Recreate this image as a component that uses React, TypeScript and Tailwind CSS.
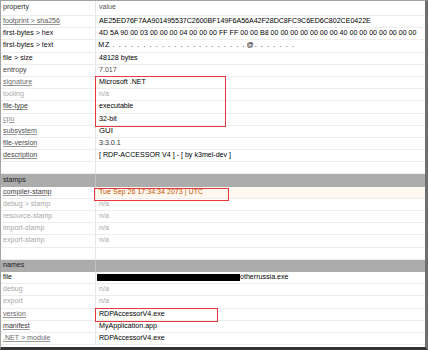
import React from "react";

type Kind = "plain" | "link" | "dim" | "head";
type Row = {
  k?: string;
  kind?: Kind;
  kc?: string;
  v?: React.ReactNode;
  vc?: string;
  vbg?: string;
  section?: boolean;
  empty?: boolean;
};

const SHA = "AE25ED76F7AA901495537C2600BF149F6A56A42F28DC8FC9C6ED6C802CE0422E";
const HEX =
  "4D 5A 90 00 03 00 00 00 04 00 00 00 FF FF 00 00 B8 00 00 00 00 00 00 00 40 00 00 00 00 00 00 00";
const TXT = ["M", "Z", ...Array(22).fill("."), "@", ...Array(7).fill(".")];

function TextBytes() {
  return (
    <span className="flex ml-[-1px]">
      {TXT.map((c, i) => (
        <span key={i} className="inline-block w-[6.2px] text-center">
          {c}
        </span>
      ))}
    </span>
  );
}

const NA = "n/a";

const rows: Row[] = [
  { k: "footprint > sha256", kind: "link", kc: "text-[#5a5a5a]", v: SHA, vc: "text-black tracking-[-0.03px]" },
  { k: "first-bytes > hex", kind: "plain", v: HEX, vc: "text-black" },
  { k: "first-bytes > text", kind: "plain", v: <TextBytes />, vc: "text-black" },
  { k: "file > size", kind: "plain", v: "48128 bytes", vc: "text-black" },
  { k: "entropy", kind: "plain", kc: "text-[#444]", v: "7.017", vc: "text-[#555]" },
  { k: "signature", kind: "link", kc: "text-[#707070]", v: "Microsoft .NET", vc: "text-black" },
  { k: "tooling", kind: "dim", v: NA, vc: "text-[#a8a8a8]" },
  { k: "file-type", kind: "link", kc: "text-[#3a3a3a]", v: "executable", vc: "text-black" },
  { k: "cpu", kind: "link", kc: "text-[#8e8e8e]", v: "32-bit", vc: "text-black" },
  { k: "subsystem", kind: "link", kc: "text-[#555]", v: "GUI", vc: "text-black text-[7.8px]" },
  { k: "file-version", kind: "link", kc: "text-[#4a4a4a]", v: "3.3.0.1", vc: "text-[#333]" },
  {
    k: "description",
    kind: "link",
    kc: "text-[#4a4a4a]",
    v: "[ RDP-ACCESSOR V4 ] - [ by k3mel-dev ]",
    vc: "text-black",
  },
  { empty: true },
  { k: "stamps", section: true },
  {
    k: "compiler-stamp",
    kind: "link",
    kc: "text-[#3a3a3a]",
    v: "Tue Sep 26 17:34:34 2073 | UTC",
    vc: "text-[#c25400]",
    vbg: "bg-[#fff8f1]",
  },
  { k: "debug > stamp", kind: "dim", v: NA, vc: "text-[#a8a8a8]" },
  { k: "resource-stamp", kind: "dim", v: NA, vc: "text-[#a8a8a8]" },
  { k: "import-stamp", kind: "dim", v: NA, vc: "text-[#a8a8a8]" },
  { k: "export-stamp", kind: "dim", v: NA, vc: "text-[#a8a8a8]" },
  { empty: true },
  { k: "names", section: true },
  {
    k: "file",
    kind: "plain",
    v: (
      <span className="flex items-center">
        <span className="inline-block w-[143px] h-[7px] bg-black ml-[-2px]" />
        <span>otherrussia.exe</span>
      </span>
    ),
    vc: "text-black",
  },
  { k: "debug", kind: "dim", v: NA, vc: "text-[#a8a8a8]" },
  { k: "export", kind: "dim", v: NA, vc: "text-[#a8a8a8]" },
  { k: "version", kind: "link", kc: "text-[#6a6a6a]", v: "RDPAccessorV4.exe", vc: "text-black" },
  { k: "manifest", kind: "link", kc: "text-[#3a3a3a]", v: "MyApplication.app", vc: "text-black" },
  { k: ".NET > module", kind: "link", kc: "text-[#6a6a6a]", v: "RDPAccessorV4.exe", vc: "text-black" },
];

function keyClass(r: Row) {
  if (r.kind === "link")
    return `${r.kc ?? "text-[#555]"} underline decoration-[#9a9a9a] underline-offset-[1px]`;
  if (r.kind === "dim") return "text-[#a8a8a8]";
  return r.kc ?? "text-[#111]";
}

export default function App() {
  return (
    <div
      className="relative w-[428px] h-[350px] bg-white border-l border-t border-l-[#a3a3a3] border-t-[#a3a3a3] border-r-[3px] border-r-[#6f6f6f] border-b-[3px] border-b-[#343434] overflow-hidden text-[7.1px] leading-none"
      style={{ fontFamily: '"Liberation Sans", Arial, sans-serif' }}
    >
      <div className="flex flex-col">
        <div className="flex h-[15px] border-b border-[#ededed]">
          <div className="w-[95px] shrink-0 pl-[2px] flex items-center border-r border-[#e6e6e6] text-[#2e2e2e]">
            property
          </div>
          <div className="flex-1 pl-[3px] flex items-center text-[#555]">value</div>
        </div>
        {rows.map((r, i) => {
          if (r.section) {
            return (
              <div key={i} className="flex h-[12.2px] bg-[#acacac]">
                <div className="w-[95px] shrink-0 pl-[2px] flex items-center border-r border-[#c2c2c2] text-[#1c1c1c]">
                  {r.k}
                </div>
                <div className="flex-1" />
              </div>
            );
          }
          if (r.empty) {
            return (
              <div key={i} className="flex h-[12.2px] border-b border-[#ededed]">
                <div className="w-[95px] shrink-0 border-r border-[#e6e6e6]" />
                <div className="flex-1" />
              </div>
            );
          }
          return (
            <div key={i} className="flex h-[12.2px] border-b border-[#ededed]">
              <div
                className={`w-[95px] shrink-0 pl-[2px] flex items-center border-r border-[#e6e6e6] whitespace-nowrap ${keyClass(r)}`}
              >
                {r.k}
              </div>
              <div
                className={`flex-1 pl-[3px] flex items-center whitespace-nowrap ${r.vc ?? "text-[#111]"} ${r.vbg ?? ""}`}
              >
                {r.v}
              </div>
            </div>
          );
        })}
      </div>

      <div className="absolute left-[94px] top-[75px] w-[131px] h-[51px] border border-[#e5393f]" />
      <div className="absolute left-[93px] top-[187px] w-[135px] h-[13px] border border-[#e5393f]" />
      <div className="absolute left-[94px] top-[307px] w-[123px] h-[14px] border border-[#e5393f]" />
    </div>
  );
}
